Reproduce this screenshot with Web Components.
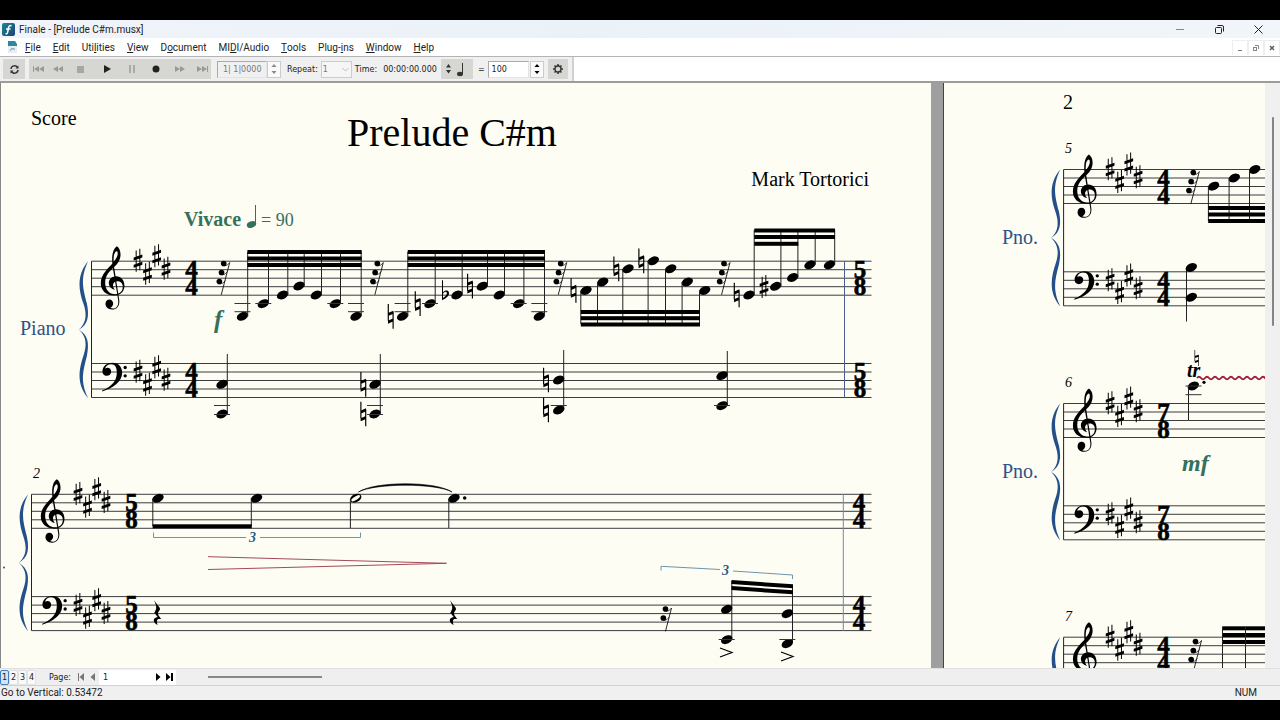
<!DOCTYPE html>
<html lang="en">
<head>
<meta charset="utf-8">
<title>Finale - [Prelude C#m.musx]</title>
<style>
  html, body { height: 100%; margin: 0; }
  body { background: #000; font-family: Roboto, "Open Sans", "Noto Sans", sans-serif; font-size: 10px; color: #222; }
</style>
</head>
<body>
<finale-window>
  <title-bar slot="title">Finale - [Prelude C#m.musx]</title-bar>
  <menu-bar slot="menu">
    <menu-entry><u>F</u>ile</menu-entry>
    <menu-entry><u>E</u>dit</menu-entry>
    <menu-entry>Uti<u>l</u>ities</menu-entry>
    <menu-entry><u>V</u>iew</menu-entry>
    <menu-entry>D<u>o</u>cument</menu-entry>
    <menu-entry>MI<u>D</u>I/Audio</menu-entry>
    <menu-entry><u>T</u>ools</menu-entry>
    <menu-entry>Plug-<u>i</u>ns</menu-entry>
    <menu-entry><u>W</u>indow</menu-entry>
    <menu-entry><u>H</u>elp</menu-entry>
  </menu-bar>
  <playback-bar slot="tools"></playback-bar>
  <score-canvas slot="score">
    <score-page page="1" class="first"></score-page>
    <score-page page="2"></score-page>
  </score-canvas>
  <page-bar slot="pages"></page-bar>
  <status-bar slot="status">Go to Vertical: 0.53472<span slot="lock">NUM</span></status-bar>
</finale-window>

<script>
const define = (name, markup, setup) => customElements.define(name, class extends HTMLElement {
  connectedCallback() {
    if (this.shadowRoot) return;
    const root = this.attachShadow({ mode: 'open' });
    root.innerHTML = typeof markup === 'function' ? markup(this) : markup;
    if (setup) setup(root, this);
  }
});

const RESET = `*{box-sizing:border-box} button,input,select{margin:0;padding:0;border:0;border-radius:0;background:none;color:inherit;font:inherit;outline:0;appearance:none} button{display:flex;align-items:center;justify-content:center} svg{display:block}`;

/* ---------- engraving ---------- */
const G = 8.5;
const glyph = (x, y, body, fill = '#000') => `<g transform="translate(${x} ${y}) scale(.3333)" fill="${fill}" stroke="none">${body}</g>`;
const line = (x1, y1, x2, y2, c = '#222', w = 1) => `<path d="M${x1} ${y1}L${x2} ${y2}" stroke="${c}" stroke-width="${w}" fill="none"/>`;
const treble = (x, y) => glyph(x, y, `<path d="M48-45C60-38 64-14 52 4C40 22 13 34 13 64C13 86 26 99 43 99C59 99 66 88 66 77C66 65 58 60 50 60C40 60 35 68 37 76C38 82 43 86 43 86C31 84 23 75 24 63C26 51 36 45 46 45C61 45 71 57 71 74C71 92 58 103 41 103C16 103 0 88 0 66C0 38 24 21 37 4C47-8 53-18 50-28C47-34 40-26 39-15C38-5 38 8 40 18L55 114C58 131 50 145 34 145C22 145 14 138 14 128C14 119 20 115 26 115C33 115 38 121 37 129C36 135 31 139 28 140C44 147 55 135 52 116L36 20C32-8 33-35 48-45Z"/>`);
const bass = (x, y) => glyph(x, y, `<path d="M3 22C5 8 17-1 33-1C51-1 62 11 62 29C62 56 34 76 2 85L2 82C30 70 46 54 46 28C46 13 41 3 29 3C19 3 12 9 11 16C20 11 29 16 29 25C29 33 23 38 16 38C8 38 2 32 3 22Z"/><circle cx="71" cy="13" r="5"/><circle cx="71" cy="38" r="5"/>`);
const sharp = (x, y) => glyph(x, y, `<path d="M-7-29h3v64h-3zM4-34h3v64h-3zM-13-8L13-17V-8L-13 1zM-13 14L13 5V14L-13 23z"/>`);
const natural = (x, y) => glyph(x, y, `<path d="M-9-37h3.500v50h-3.500zM5.500-14h3.500v51h-3.500zM-8-10L8-17V-8L-8-1zM-8 13L8 6V15L-8 22z"/>`);
const flat = (x, y) => glyph(x, y, `<path d="M-9-44h3V-8C4-19 16-11 11 0C7 8-2 12-9 16ZM-6-3V9C3 4 8-3 5-8C2-12-4-8-6-3Z" fill-rule="evenodd"/>`);
const brace = (x, y) => {
  const half = 'M-10 0C-48 44-36 92-24 128C-14 158-14 184-38 206C-8 188-7 162-14 126C-26 80-34 50-10 0Z';
  return glyph(x, y, `<path d="${half}"/><path d="${half}" transform="translate(0 411) scale(1 -1)"/>`, '#24508a');
};
const quarterRest = (x, y) => glyph(x, y, `<path d="M-9-2L8 20C12 27 2 32 3 38C4 45 11 50 13 55C3 51-4 56 2 72C-14 64-13 50 2 48L-8 35C-4 28 3 22-9-2Z"/>`);
const flagRest = (x, y, n) => {
  let s = '';
  for (let i = 0; i < n; i++) {
    const cx = -18 - i * 6.5, cy = i * 27;
    s += `<circle cx="${cx}" cy="${cy}" r="8.500"/><path d="M${cx} ${cy + 7}Q${cx + 12} ${cy + 8} ${cx + 18} ${cy - 3}" fill="none" stroke="#000" stroke-width="2"/>`;
  }
  const h = 13 + n * 27;
  return glyph(x, y, s + `<path d="M0-3L${-h * .27} ${h}" stroke="#000" stroke-width="2.500"/>`);
};
const head = (x, y, fill = '#000') => `<ellipse cx="${x}" cy="${y}" rx="6" ry="4" transform="rotate(-25 ${x} ${y})" fill="${fill}"/>`;
const ledger = (x, y) => line(x - 8, y, x + 8, y, '#333');
const beam = (x1, x2, y, h = 4) => `<rect x="${x1}" y="${y}" width="${x2 - x1}" height="${h}"/>`;
const text = (x, y, size, str, extra = '') => `<text x="${x}" y="${y}" font-size="${size}" ${extra}>${str}</text>`;
const METER = 'font-weight="bold" text-anchor="middle" stroke="#000" stroke-width=".6"';
const meter = (x, y, top, bottom) => [y, y + 102].map(t => text(x, t + 17, 25, top, METER) + text(x, t + 34, 25, bottom, METER)).join('');

function system(x, y, right, top, bottom) {
  let s = brace(x, y);
  for (const t of [y, y + 102.3]) for (let i = 0; i < 5; i++) s += line(x, t + i * G, right, t + i * G, '#3c3c40');
  s += line(x, y, x, y + 136.3, '#222');
  s += treble(x + 9.3, y) + bass(x + 10, y + 102);
  [[46.5, 0], [56, 12.8], [65.2, -4.7], [74.5, 8]].forEach(([dx, dy]) => {
    s += sharp(x + dx, y + dy - 1) + sharp(x + dx, y + dy + 110);
  });
  return s + meter(x + 100, y, top, bottom);
}
/* notes: [x, y, accidental, accidental x] ; dir 1 = stems up, -1 = stems down */
function group(notes, dir, stemEnd) {
  return notes.map(([x, y, acc, ax]) =>
    (acc ? acc(ax, y) : '') + head(x, y) + line(x + dir * 5.2, y, x + dir * 5.2, stemEnd)).join('');
}
function chord(x, ys, stemX, stemTo, stemFrom, natX) {
  return line(stemX, stemFrom, stemX, stemTo) + ys.map(y => head(x, y) + (natX ? natural(natX, y) : '')).join('');
}

function pageOne() {
  const green = 'fill="#35705c"', blue = 'fill="#2d5287"';
  let s = text(31, 125, 20, 'Score') + text(347, 146, 40, 'Prelude C#m') + text(869, 186, 20, 'Mark Tortorici', 'text-anchor="end"');
  s += text(184, 226, 20, 'Vivace', 'font-weight="bold" ' + green) + text(261, 226, 18, '= 90', green);
  s += `<ellipse cx="251.500" cy="224.500" rx="4.800" ry="3.200" transform="rotate(-20 251.500 224.500)" fill="#35705c"/>` + line(255.5, 224, 255.5, 205, '#35705c');
  s += system(91.5, 261.2, 871.5, 4, 4);
  s += text(20, 335, 20, 'Piano', blue) + text(214, 328, 25, 'f', 'font-weight="bold" font-style="italic" ' + green);
  s += [229.7, 383.3, 566.7, 730].map(x => flagRest(x, 263.5, 3)).join('');
  s += group([[242.5, 316.3], [263.3, 303.7], [282.6, 295], [299, 286], [316.3, 295], [335.3, 303.7], [356, 316.3]], 1, 252);
  s += [250, 256.5, 263].map(y => beam(247.4, 361.7, y)).join('');
  s += group([[402.6, 316.3, natural, 390.7], [430, 303.7, natural, 417.7], [457, 295, flat, 445], [482.3, 286.2, natural, 470], [499.3, 295], [518.7, 303.7], [539.3, 316.3]], 1, 252);
  s += [250, 256.5, 263].map(y => beam(407.7, 545, y)).join('');
  for (const x of [242.5, 356, 402.6, 539.3]) s += ledger(x, 303.5) + ledger(x, 311.7);
  for (const x of [263.3, 335.3, 430, 518.7]) s += ledger(x, 303.5);
  s += group([[586, 290.5, natural, 573.5], [602.7, 282], [628, 268.8, natural, 616.3], [653.3, 260.8, natural, 641.3], [670.7, 268.8], [687.3, 282], [704.7, 290.5]], -1, 324);
  s += [310, 316.2, 322.5].map(y => beam(580.8, 700, y)).join('');
  s += group([[749, 295, natural, 736.7], [775.7, 286.3, sharp, 764], [792.7, 277.5], [810, 264.8], [829.5, 264.8]], 1, 230);
  s += beam(754.3, 835, 228.5) + beam(754.3, 835, 235) + beam(754.3, 798.3, 241.8);
  s += chord(222, [384.3, 414], 227.3, 354, 414) + chord(375, [384.3, 414], 380.3, 354, 414, 363.3);
  s += chord(558.7, [380, 410], 563.7, 350, 410, 546) + chord(722, [375.7, 405.7], 727.3, 351, 405);
  s += ledger(222, 405.5) + ledger(222, 414.5) + ledger(375, 405.5) + ledger(375, 414.5) + ledger(558.7, 405.5) + ledger(722, 405.5);
  s += line(844.5, 261, 844.5, 397.5, '#4a6090') + meter(860, 261.2, 5, 8);

  s += text(33, 478, 14, '2', 'font-style="italic"') + system(31.5, 494.3, 871.5, 5, 8);
  s += `<circle cx="4" cy="567.500" r="1" fill="#2d5287"/>`;
  s += group([[158, 498.3], [256.5, 498.3]], -1, 526) + beam(152.6, 251.8, 524.3);
  s += head(355.7, 498.2) + `<ellipse cx="355.700" cy="498.200" rx="5" ry="1.800" transform="rotate(-32 355.700 498.200)" fill="#fdfdf4"/>` + line(350.4, 499, 350.4, 528);
  s += group([[454, 498.3]], -1, 528) + `<circle cx="464.700" cy="498" r="1.800"/>`;
  s += `<path d="M358.500 492C375 481 436 481 452 492C436 483 375 483 358.500 492Z" stroke="#000" stroke-width=".6"/>`;
  s += `<path d="M153.500 532.500V537.500H246M260 537.500H360.500V532.500M661 570.500V566.300L720 569.500M733 571L792.500 575V579" fill="none" stroke="#6f93ad"/>`;
  s += text(249, 542, 14, '3', 'font-weight="bold" font-style="italic" fill="#2d5a7d"') + text(722, 575, 14, '3', 'font-weight="bold" font-style="italic" fill="#2d5a7d"');
  s += `<path d="M208 556.700L446.500 563.300L208 569.500" fill="none" stroke="#a34a58"/>`;
  s += quarterRest(157, 601) + quarterRest(453, 601) + flagRest(671.5, 609, 2);
  s += chord(726.7, [609.3, 639.7], 731.8, 581, 639) + chord(787.3, [613.7, 643.7], 792.5, 585, 643);
  s += `<path d="M731.500 580L793 584.300V588.300L731.500 584ZM731.500 586L793 590.300V594.300L731.500 590Z"/>` + ledger(726.7, 639.5) + ledger(787.3, 639.5);
  s += `<path d="M720 648L732 652.500L720 657M781 652L793 656.500L781 661" fill="none" stroke="#000" stroke-width="1.200"/>`;
  s += line(843.3, 494, 843.3, 631, '#7a86a8') + meter(859, 494.3, 4, 4);
  return s;
}

function pageTwo() {
  const blue = 'fill="#2d5287"', it = 'font-style="italic"', R = 3000;
  let s = text(1063, 109, 20, '2');
  s += text(1065, 153, 14, '5', it) + system(1063.6, 169.5, R, 4, 4) + text(1002, 244, 20, 'Pno.', blue);
  s += flagRest(1199.3, 172.5, 3) + group([[1213.6, 186.2], [1234.3, 178], [1254.7, 169.5]], -1, 221);
  s += [206, 212.5, 219].map(y => beam(1208.2, R, y)).join('');
  s += chord(1191.3, [267.5, 297.3], 1186.5, 321.5, 267);
  s += text(1065, 387, 14, '6', it) + system(1063.6, 403.5, R, 7, 8) + text(1002, 478, 20, 'Pno.', blue);
  s += head(1193.3, 386) + line(1188.5, 386, 1188.5, 420) + ledger(1193.5, 386) + ledger(1193.5, 394.7) + `<circle cx="1204" cy="382.300" r="1.600"/>`;
  s += glyph(1196.5, 358, '<path d="M-6-24h2v34h-2zM5-10h2v34h-2zM-5-6L6-10V-4L-5 0zM-5 9L6 5V11L-5 15z"/>');
  s += text(1187, 377, 20, 'tr', 'font-weight="bold" font-style="italic"');
  let wave = 'M1197 378';
  for (let i = 0; i < 100; i++) wave += 'q2 -2.500 4 0t4 0';
  s += `<path d="${wave}" fill="none" stroke="#a3203c" stroke-width="2"/>`;
  s += text(1182, 471, 24, 'mf', 'font-weight="bold" font-style="italic" fill="#35705c"');
  s += text(1065, 621, 14, '7', it) + system(1063.6, 637.2, R, 4, 4) + flagRest(1201.5, 641.5, 3);
  s += [626.3, 633, 640].map(y => beam(1222.3, R, y)).join('') + line(1222.5, 627, 1222.5, 700) + line(1245.5, 627, 1245.5, 700);
  return s;
}

/* ---------- elements ---------- */
define('finale-window', `<style>
  :host{display:flex;flex-direction:column;box-sizing:border-box;height:100%;padding:20px 0;overflow:hidden}
  slot{display:block;flex:none} slot[name=score]{flex:1;min-height:0}
</style><slot name="title"></slot><slot name="menu"></slot><slot name="tools"></slot><slot name="score"></slot><slot name="pages"></slot><slot name="status"></slot>`);

define('title-bar', `<style>${RESET}
  :host{display:flex;align-items:center;height:18px;padding:0 2px;background:linear-gradient(90deg,#f1f3fa,#eaf2f8 45%,#f2f5f9)}
  .logo{margin-right:4px} .t{flex:1;white-space:nowrap;font-size:10px}
  button{width:39px;height:18px}
</style>
<svg class="logo" width="13" height="13" viewBox="0 0 13 13"><defs><linearGradient id="g" x2="1" y2="1"><stop stop-color="#1a8a8c"/><stop offset="1" stop-color="#1c3f7c"/></linearGradient></defs><rect width="13" height="13" rx="2" fill="url(#g)"/><path d="M9.500 3Q7 1.500 6.500 5L5.700 9Q5.300 11.500 3.500 10.500M4 6H8.500" fill="none" stroke="#fff" stroke-width="1.500"/></svg>
<span class="t"><slot></slot></span>
<button aria-label="Minimize"><svg width="9" height="9"><path d="M0 4.500H8" stroke="#888"/></svg></button>
<button aria-label="Restore"><svg width="9" height="9" fill="none" stroke="#222"><rect x=".5" y="2.500" width="6" height="6" rx="1"/><path d="M2.500 .5H7Q8.500 .5 8.500 2V6.500"/></svg></button>
<button aria-label="Close"><svg width="9" height="9"><path d="M.5 .5L8.500 8.500M8.500 .5L.5 8.500" stroke="#222"/></svg></button>`);

define('menu-entry', `<style>${RESET}:host{display:block} button{height:18px;padding:0 6px;white-space:nowrap;font-size:10px}</style><button><slot></slot></button>`);

define('menu-bar', `<style>${RESET}
  :host{display:flex;align-items:center;height:19px;box-sizing:border-box;background:#fff;border-bottom:1px solid #b4b4b4}
  .doc{margin:0 1px 0 7px} .sp{flex:1}
  .win{width:16px;height:15px;border:1px solid #eee;border-bottom:0}
</style>
<svg class="doc" width="11" height="13"><path d="M1 1H8L10 4V12H1Z" fill="#e6eef4"/><path d="M1 0H8L10 3V5H1Z" fill="#2b8a9a"/><path d="M3 10Q4 6 7 8M4 8H8" stroke="#8ab" fill="none"/></svg>
<slot></slot><span class="sp"></span>
<button class="win" aria-label="Minimize document"><svg width="8" height="8"><path d="M2 6.500H6" stroke="#777"/></svg></button>
<button class="win" aria-label="Restore document"><svg width="8" height="8" fill="none" stroke="#888"><rect x="1.500" y="3.500" width="3" height="3"/><path d="M3 1.500H6.500V5"/></svg></button>
<button class="win" aria-label="Close document"><svg width="8" height="8"><path d="M2 2L6 6M6 2L2 6" stroke="#555" stroke-width="1.300"/></svg></button>`);

define('playback-bar', `<style>${RESET}
  :host{display:block;background:#fff;border-bottom:2px solid #9c9c98;height:26px;box-sizing:border-box;font-family:"DejaVu Sans","Open Sans",sans-serif;font-size:8px}
  .bar{display:flex;align-items:center;height:24px;width:574px;padding-left:3px;background:#f0f0f0;border-right:2px solid #d0d0d0;white-space:nowrap}
  .b{height:20px;background:#d6d6d3;flex:none} .sync{width:22px;margin-right:4px}
  .transport{display:grid;grid-template-columns:20px 18px 27px 25px 25px 24px 24px 19px;width:182px;margin-right:6px} .transport button{height:20px}
  .f{height:17px;border:1px solid #aaa;border-right-color:#e4e4e4;border-bottom-color:#e4e4e4;padding:0 4px;flex:none}
  .count{width:50px;color:#777;padding:0 2px 0 5px}
  .spin{display:flex;flex-direction:column;width:14px;height:17px;flex:none;border:1px solid #ccc;background:#fafafa;margin-right:4px} .spin button{flex:1}
  .rep{margin-left:2px}
  select.f{width:31px;color:#777;background:#f6f6f6;border-color:#ccc;padding:0 1px;margin:0 3px}
  .sel{position:relative;display:flex} .sel svg{position:absolute;right:6px;top:6px;pointer-events:none}
  .time{margin:0 4px 0 6px} .tempo{width:32px;margin-right:5px}
  .bpm{width:41px;background:#fff;margin:0 1px 0 3px;padding:0 3px}
  .gear{width:20px}
</style>
<div class="bar">
 <button class="b sync" aria-label="Sync"><svg width="9" height="9" fill="none" stroke="#333" stroke-width="1.500"><path d="M1 4A3.500 3.500 0 0 1 7.500 2.500M8 5A3.500 3.500 0 0 1 1.500 6.500"/><path d="M8.500 .5V3.500H5.500ZM.5 8.500V5.500H3.500Z" fill="#333" stroke="none"/></svg></button>
 <div class="b transport">
  <button aria-label="Rewind to start"><svg width="12" height="8" fill="#999"><path d="M0 1H1V7H0ZM6 1V7L1 4ZM11 1V7L6 4Z"/></svg></button>
  <button aria-label="Rewind"><svg width="12" height="8" fill="#999"><path d="M6 1V7L1 4ZM11 1V7L6 4Z"/></svg></button>
  <button aria-label="Stop"><svg width="7" height="7"><path d="M0 0H7V7H0Z" fill="#a6a6a6"/></svg></button>
  <button aria-label="Play"><svg width="8" height="8"><path d="M1 0L8 4L1 8Z" fill="#222"/></svg></button>
  <button aria-label="Pause"><svg width="8" height="8"><path d="M1 0H3V8H1ZM5 0H7V8H5Z" fill="#aaa"/></svg></button>
  <button aria-label="Record"><svg width="8" height="8"><circle cx="4" cy="4" r="3.500" fill="#222"/></svg></button>
  <button aria-label="Fast forward"><svg width="12" height="8" fill="#999"><path d="M1 1L6 4L1 7ZM6 1L11 4L6 7Z"/></svg></button>
  <button aria-label="Forward to end"><svg width="12" height="8" fill="#999"><path d="M1 1L6 4L1 7ZM6 1L11 4L6 7ZM11 1H12V7H11Z"/></svg></button>
 </div>
 <input class="f count" value="1| 1|0000" aria-label="Measure counter">
 <span class="spin"><button aria-label="Next measure"><svg width="6" height="3"><path d="M3 0L5.500 3H.5Z" fill="#888"/></svg></button><button aria-label="Previous measure"><svg width="6" height="3"><path d="M.5 0H5.500L3 3Z" fill="#888"/></svg></button></span>
 <label class="rep" for="rep">Repeat:</label>
 <span class="sel"><select class="f" id="rep"><option>1</option></select><svg width="7" height="5"><path d="M.5 1L3.500 4L6.500 1" fill="none" stroke="#bbb"/></svg></span>
 <span>Time:</span><span class="time">00:00:00.000</span>
 <button class="b tempo" aria-label="Tempo unit"><svg width="22" height="16"><path d="M2.500 3L5 6.500H0ZM0 9H5L2.500 12.500Z" fill="#333"/><ellipse cx="14" cy="13" rx="3" ry="2.200" fill="#333"/><path d="M16.500 13V2" stroke="#333"/></svg></button>
 <label for="bpm">=</label><input class="f bpm" id="bpm" value="100">
 <span class="spin"><button aria-label="Faster"><svg width="6" height="3"><path d="M3 0L5.500 3H.5Z"/></svg></button><button aria-label="Slower"><svg width="6" height="3"><path d="M.5 0H5.500L3 3Z"/></svg></button></span>
 <button class="b gear" aria-label="Playback settings"><svg width="12" height="12" fill="none" stroke="#333"><circle cx="6" cy="6" r="3" stroke-width="1.300"/><path d="M6 1V3M6 9V11M1 6H3M9 6H11M2.500 2.500L4 4M8 8L9.500 9.500M9.500 2.500L8 4M4 8L2.500 9.500" stroke-width="1.500"/></svg></button>
</div>`);

define('score-canvas', `<style>
  :host{display:flex;height:100%;box-sizing:border-box;background:#9f9f9f}
  .view{display:flex;flex:1;min-width:0;gap:12px;border-left:1px solid #888;box-sizing:border-box}
  .bar{flex:none;width:15px;background:#f0f0f0;box-sizing:border-box;padding:34px 6px 0 7px}
  .thumb{height:209px;background:#858585;border-radius:1px}
  ::slotted(*){flex:1 1 0;min-width:0} ::slotted(.first){flex:0 0 930px}
</style><div class="view"><slot></slot></div><div class="bar"><div class="thumb"></div></div>`);

/* Both pages share the coordinates of the open spread. */
define('score-page', el => {
  const second = el.getAttribute('page') === '2';
  return `<style>:host{display:block;height:100%;overflow:hidden;background:#fdfdf4;box-sizing:border-box;${second ? 'border-left:1px solid #444' : ''}} svg{display:block;font-family:"Liberation Serif",serif;fill:#000}</style>
  <svg width="100%" height="100%"><g transform="translate(${second ? -944 : -1} -83)">${second ? pageTwo() : pageOne()}</g></svg>`;
});

define('page-bar', `<style>${RESET}
  :host{display:flex;align-items:center;height:18px;box-sizing:border-box;background:#efefef;border-top:1px solid #e0e0e0;border-bottom:1px solid #d2d2d2;font-family:"DejaVu Sans",sans-serif;font-size:8px}
  .tab{width:9px;height:15px;background:#fafafa;border:1px solid #e2e2e2;border-radius:2px}
  .tab.on{background:#cfe4f7;border-color:#3f7fbf}
  .tabs{display:flex;margin-right:13px}
  label{width:26px} .n{width:12px;height:15px} .w{background:#fff}
  input{width:53px;height:15px;background:#fff;padding:0 4px}
  .track{flex:1;padding-left:32px} .thumb{width:114px;height:2px;background:#888}
</style>
<div class="tabs"><button class="tab on">1</button><button class="tab">2</button><button class="tab">3</button><button class="tab">4</button></div>
<label for="pg">Page:</label>
<button class="n" aria-label="First page"><svg width="8" height="8"><path d="M1 0H2V8H1ZM7 0V8L2.500 4Z" fill="#777"/></svg></button>
<button class="n" aria-label="Previous page"><svg width="8" height="8"><path d="M6 0V8L1.500 4Z" fill="#777"/></svg></button>
<input id="pg" value="1">
<button class="n w" aria-label="Next page"><svg width="8" height="8"><path d="M2 0V8L6.500 4Z"/></svg></button>
<button class="n w" aria-label="Last page"><svg width="8" height="8"><path d="M0 0V8L4.500 4ZM5 0H7V8H5Z"/></svg></button>
<div class="track"><div class="thumb"></div></div>`);

define('status-bar', `<style>
  :host{display:flex;align-items:center;justify-content:space-between;height:14px;padding:0 23px 0 1px;background:#f0f0f0;font-size:10px;line-height:14px;white-space:nowrap}
</style><span><slot></slot></span><slot name="lock"></slot>`);
</script>
</body>
</html>
